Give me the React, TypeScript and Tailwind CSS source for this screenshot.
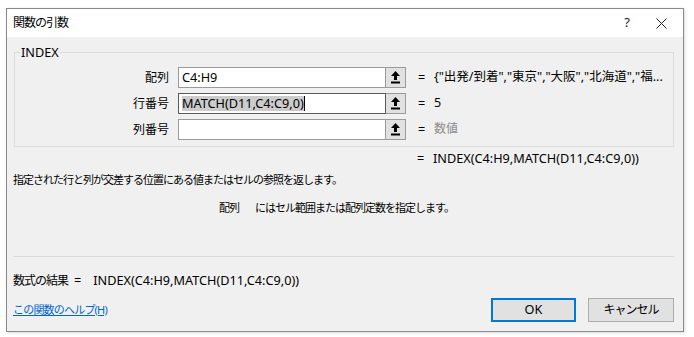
import React from 'react';

const UploadIcon: React.FC = () => (
  <svg width="9" height="13" viewBox="0 0 9 13" className="block">
    <polygon points="4.5,0 9,5 6,5 6,9 3,9 3,5 0,5" fill="#000" />
    <rect x="0" y="10.5" width="9" height="2" fill="#000" />
  </svg>
);

interface ArgRowProps {
  label: string;
  value?: React.ReactNode;
  result: React.ReactNode;
  focused?: boolean;
}

const ArgRow: React.FC<ArgRowProps> = ({ label, value, result, focused }) => (
  <div className="flex h-[21px] items-center">
    <div className="w-[153px] text-right text-[12px] leading-none">{label}</div>
    <div
      className={`ml-[9px] flex h-[21px] w-[208px] items-center border bg-white pl-[3px] text-[12.7px] ${
        focused ? 'border-[#5a5a5a]' : 'border-[#9a9a9a]'
      }`}
    >
      {value}
    </div>
    <div className="flex h-[21px] w-[20px] items-center justify-center border border-l-0 border-[#9a9a9a] bg-[#e1e1e1]">
      <UploadIcon />
    </div>
    <span className="ml-[12px] w-[16px] text-[12.7px]">=</span>
    <div className="text-[12.5px] whitespace-nowrap">{result}</div>
  </div>
);

const App: React.FC = () => {
  return (
    <div
      className="h-[337px] w-[694px] bg-white pl-[6px] pt-[8px] text-black"
      style={{ fontFamily: '"Noto Sans", "Noto Sans CJK JP", sans-serif' }}
    >
      <div className="flex h-[324px] w-[678px] flex-col border border-[#8a8a8a] shadow-[1px_1px_3px_rgba(0,0,0,0.15)]">
        {/* title bar */}
        <div className="flex h-[28px] items-center bg-white pl-[6px]">
          <span className="text-[12px] tracking-[-1px]">関数の引数</span>
          <span className="ml-auto text-[13px] text-[#222]">?</span>
          <svg width="11" height="11" viewBox="0 0 11 11" className="ml-[26px] mr-[16px]">
            <path d="M0.5 0.5 L10.5 10.5 M10.5 0.5 L0.5 10.5" stroke="#222" strokeWidth="1" />
          </svg>
        </div>

        {/* body */}
        <div className="flex flex-1 flex-col bg-[#f0f0f0] pl-[7px] pr-[9px] pb-[7px]">
          <fieldset className="mt-[7px] border border-[#dcdcdc] pb-[6px] pl-px">
            <legend className="ml-[4px] px-[1px] text-[12.7px] leading-[16px]">INDEX</legend>
            <div className="mt-[7px] flex flex-col gap-[5px]">
              <ArgRow
                label="配列"
                value="C4:H9"
                result={'{"出発/到着","東京","大阪","北海道","福...'}
              />
              <ArgRow
                label="行番号"
                focused
                value={
                  <span className="flex items-center">
                    <span className="bg-[#cccccc] leading-[15px]">MATCH(D11,C4:C9,0)</span>
                    <span className="h-[15px] w-px bg-black" />
                  </span>
                }
                result="5"
              />
              <ArgRow label="列番号" result={<span className="text-[12px] text-[#8c8c8c]">数値</span>} />
            </div>
          </fieldset>

          <div className="mt-[4px] flex h-[16px] items-center text-[12.7px]">
            <span className="ml-[403px] w-[16px]">=</span>
            <span>INDEX(C4:H9,MATCH(D11,C4:C9,0))</span>
          </div>

          <div className="mt-[5px] -ml-px h-[16px] text-[11px] leading-[16px] tracking-[-1px]">
            指定された行と列が交差する位置にある値またはセルの参照を返します。
          </div>

          <div className="mt-[12px] flex h-[16px] items-center text-[11px] tracking-[-1px]">
            <span className="ml-[205px]">配列</span>
            <span className="ml-[16px]">にはセル範囲または配列定数を指定します。</span>
          </div>

          <div className="mt-[40px] -ml-px h-px bg-[#dadada]" />

          <div className="mt-[16px] -ml-px flex h-[16px] items-center text-[12.7px]">
            <span className="text-[12px] tracking-[-1px]">数式の結果</span>
            <span className="ml-[6px]">=</span>
            <span className="ml-[12px]">INDEX(C4:H9,MATCH(D11,C4:C9,0))</span>
          </div>

          <div className="mt-[9px] flex items-center">
            <a href="#" className="-ml-px text-[11px] tracking-[-0.8px] text-[#0066cc] underline">
              この関数のヘルプ(H)
            </a>
            <button className="ml-auto h-[24px] w-[85px] border-2 border-[#0078d7] bg-[#e1e1e1] text-[12.7px]">
              OK
            </button>
            <button className="ml-[12px] h-[24px] w-[86px] border border-[#adadad] bg-[#e1e1e1] text-[12px] tracking-[-1px]">
              キャンセル
            </button>
          </div>
        </div>
      </div>
    </div>
  );
};

export default App;
